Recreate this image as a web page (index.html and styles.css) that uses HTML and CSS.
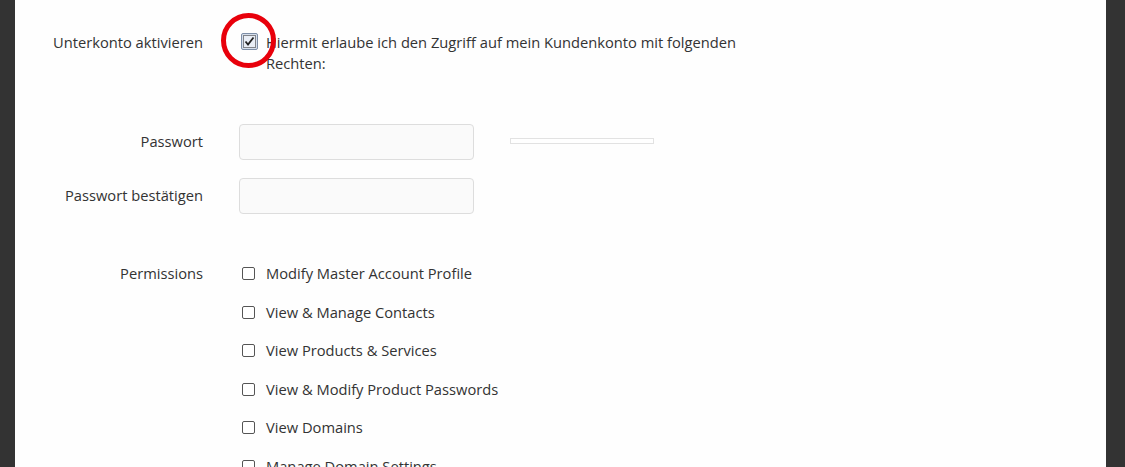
FILE: index.html
```html
<!DOCTYPE html>
<html lang="de">
<head>
  <meta charset="UTF-8">
  <title>Unterkonto</title>
  <link rel="stylesheet" href="styles.css">
</head>
<body>

<div class="page">
  <div class="rail rail-left"></div>

  <div class="content">
    <div class="form-row row-activate">
      <label class="form-label">Unterkonto aktivieren</label>
      <div class="form-control activate">
        <span class="check-big">
          <svg width="17" height="17" viewBox="0 0 17 17">
            <rect x="0.5" y="0.5" width="16" height="16" rx="1.5" fill="#d6dfec" stroke="#7d8ea6"/>
            <rect x="2.5" y="2.5" width="12" height="12" fill="#e9eef6" stroke="#222" stroke-dasharray="1 1"/>
            <path d="M4.5 8.5 L7 11.5 L12.5 4.5" fill="none" stroke="#222" stroke-width="1.8"/>
          </svg>
          <span class="mark-ring"></span>
        </span>
        <span class="activate-text">Hiermit erlaube ich den Zugriff auf mein Kundenkonto mit folgenden Rechten:</span>
      </div>
    </div>

    <div class="form-row row-password">
      <label class="form-label">Passwort</label>
      <div class="form-control">
        <input type="password" class="text-input">
        <div class="strength-bar"></div>
      </div>
    </div>

    <div class="form-row row-confirm">
      <label class="form-label">Passwort bestätigen</label>
      <div class="form-control">
        <input type="password" class="text-input">
      </div>
    </div>

    <div class="form-row row-perms">
      <label class="form-label">Permissions</label>
      <ul class="perm-list">
        <li><input type="checkbox"> Modify Master Account Profile</li>
        <li><input type="checkbox"> View &amp; Manage Contacts</li>
        <li><input type="checkbox"> View Products &amp; Services</li>
        <li><input type="checkbox"> View &amp; Modify Product Passwords</li>
        <li><input type="checkbox"> View Domains</li>
        <li><input type="checkbox"> Manage Domain Settings</li>
      </ul>
    </div>
  </div>

  <div class="rail rail-right"></div>
</div>

</body>
</html>
```

FILE: styles.css
```css
* {
  margin: 0;
  padding: 0;
  list-style: none;
  box-sizing: border-box;
}

body {
  font-family: "Open Sans", "Liberation Sans", sans-serif;
  font-size: 14.7px;
  line-height: 21px;
  color: #333;
  background-color: #fff;
  overflow: hidden;
}

.page {
  display: flex;
  height: 467px;
}

.rail {
  background-color: #333;
  flex-shrink: 0;
}

.rail-left {
  width: 15px;
}

.rail-right {
  width: 19px;
}

.content {
  flex: 1;
  padding-top: 32px;
  background-color: #fefefe;
}

/* label column ends at x=203, controls start at x=239 */
.form-row {
  display: flex;
  gap: 36px;
}

.form-label {
  width: 188px;
  text-align: right;
  flex-shrink: 0;
}

.form-control {
  display: flex;
  align-items: center;
  gap: 36px;
}

.activate {
  align-items: flex-start;
  gap: 8px;
}

.check-big {
  position: relative;
  display: block;
  width: 17px;
  height: 17px;
  margin-left: 2px;
  margin-top: 1px;
}

.check-big svg {
  display: block;
}

/* red marker ring drawn over the checkbox */
.mark-ring {
  position: absolute;
  left: -20px;
  top: -20px;
  width: 55px;
  height: 55px;
  border: 5px solid #e8000b;
  border-radius: 50%;
}

.activate-text {
  width: 500px;
}

.row-password {
  margin-top: 50px;
}

.row-password .form-label,
.row-confirm .form-label {
  align-self: center;
  margin-top: -2px;
}

.row-confirm {
  margin-top: 18px;
}

.text-input {
  display: block;
  width: 235px;
  height: 36px;
  background-color: #fafafa;
  border: 1px solid #ddd;
  border-radius: 4px;
  outline: none;
}

.strength-bar {
  width: 144px;
  height: 6px;
  border: 1px solid #e2e2e2;
  background-color: #fff;
  margin-top: -2px;
}

.row-perms {
  margin-top: 49px;
}

.perm-list li {
  display: flex;
  align-items: center;
  gap: 11px;
  height: 21px;
  margin-bottom: 17.5px;
}

.perm-list input {
  appearance: none;
  -webkit-appearance: none;
  display: block;
  width: 13px;
  height: 13px;
  margin-left: 3px;
  border: 1px solid #555;
  border-radius: 2px;
  background-color: #fff;
}
```
